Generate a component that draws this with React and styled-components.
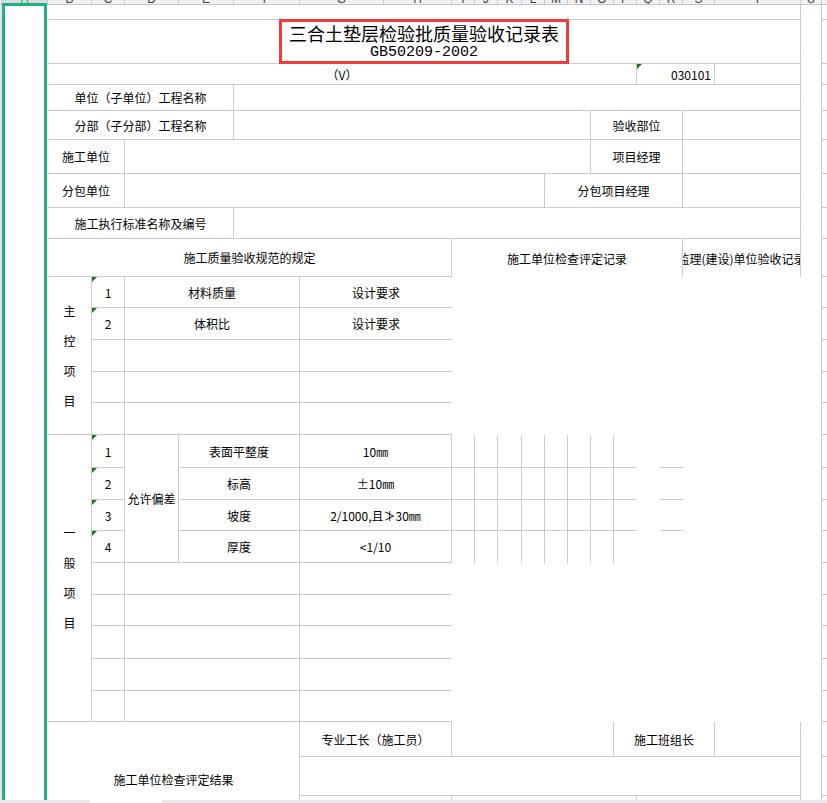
import React from "react";
import styled, { createGlobalStyle, css } from "styled-components";

const COLS = [2, 46, 44, 33, 54, 55, 66, 84, 68, 23, 23, 24, 23, 23, 23, 23, 23, 23, 23, 32, 86, 21, 40];
const ROWS = [15, 44, 21, 26, 29, 34, 34, 31, 38, 31, 32, 32, 31, 32, 33, 32, 31, 32, 32, 31, 33, 32, 31, 35, 39, 40];
const LETTERS = "ABCDEFGHIJKLMNOPQRSTUV";
const GRID = "#c6cbd9";

const colSpan = (spec) => {
  const [a, b] = spec.split(":");
  return [LETTERS.indexOf(a) + 2, LETTERS.indexOf(b || a) + 3];
};
const rowSpan = (spec) => {
  const [a, b] = String(spec).split(":").map(Number);
  return [a, (b || a) + 1];
};

const Global = createGlobalStyle`
  html, body { margin: 0; padding: 0; background: #fff; overflow: hidden; }
  body { font-family: "Noto Sans CJK SC", "Noto Sans", sans-serif; }
`;

const Sheet = styled.div`
  position: relative;
  width: 827px;
  height: 803px;
  overflow: hidden;
  background: #fff;
  display: flex;
  flex-direction: column;
`;

const HeaderBar = styled.div`
  flex: none;
  display: flex;
  height: 5px;
  box-sizing: border-box;
  background: #f1f1f3;
  border-bottom: 1px solid #c4c6cc;
  overflow: hidden;
`;

const HeaderCell = styled.div`
  flex: none;
  width: ${({ $w }) => $w}px;
  box-sizing: border-box;
  border-right: 1px solid #c9cad0;
  display: flex;
  align-items: flex-end;
  justify-content: center;
  font: 12px/10px "Liberation Sans", sans-serif;
  color: ${({ $active }) => ($active ? "#1fa872" : "#444")};
  background: ${({ $active }) => ($active ? "#d9dbe0" : "transparent")};
`;

const Grid = styled.div`
  flex: none;
  display: grid;
  grid-template-columns: ${COLS.map((w) => w + "px").join(" ")};
  grid-template-rows: ${ROWS.map((h) => h + "px").join(" ")};
`;

const Cell = styled.div`
  grid-column: ${({ $c }) => `${$c[0]} / ${$c[1]}`};
  grid-row: ${({ $r }) => `${$r[0]} / ${$r[1]}`};
  position: relative;
  box-sizing: border-box;
  min-width: 0;
  display: flex;
  align-items: center;
  justify-content: ${({ $align }) => ($align === "end" ? "flex-end" : "center")};
  padding-right: ${({ $align }) => ($align === "end" ? "3px" : "0")};
  border-right: ${({ $R }) => ($R ? `1px solid ${GRID}` : "0")};
  border-bottom: ${({ $B }) => ($B ? `1px solid ${GRID}` : "0")};
  overflow: ${({ $clip }) => ($clip ? "hidden" : "visible")};
  white-space: nowrap;
  font-size: 12px;
  color: #000;
  ${({ $tri }) =>
    $tri &&
    css`
      &::before {
        content: "";
        position: absolute;
        left: 0;
        top: 0;
        border-top: 5px solid #127c12;
        border-right: 5px solid transparent;
      }
    `}
`;

const TitleCell = styled(Cell)`
  align-items: flex-start;
`;

const RowEdge = styled(Cell)`
  background: #e6e7eb;
`;

const TitleFrame = styled.div`
  box-sizing: border-box;
  width: 290px;
  height: 45px;
  margin-top: -1px;
  border: 3px solid #f23b3b;
  display: flex;
  flex-direction: column;
  align-items: center;
  justify-content: center;
`;

const TitleMain = styled.div`
  font-family: "Noto Sans CJK SC", sans-serif;
  font-size: 18px;
  line-height: 22px;
  color: #000;
`;

const TitleCode = styled.div`
  font: 15px/17px "Liberation Mono", monospace;
  color: #000;
`;

const VerticalLabel = styled.div`
  display: flex;
  flex-direction: column;
  align-items: center;
  line-height: 30px;
`;

const SelectionFrame = styled.div`
  position: absolute;
  left: 2px;
  top: 3px;
  width: 45px;
  height: 830px;
  box-sizing: border-box;
  border: 3px solid #1fb27a;
  pointer-events: none;
`;

const ScrollStrip = styled.div`
  position: absolute;
  left: 0;
  right: 0;
  bottom: 0;
  height: 3px;
  background: #e8e8ec;
  display: flex;
`;

const ScrollGap = styled.div`
  margin-left: 90px;
  width: 72px;
  background: #fff;
`;

const cells = [];
const add = (c, r, opts = {}) => cells.push({ c, r, ...opts });

// Rows 1-9
add("B:T", 1, { R: 1, B: 1 });
add("B:T", 2, { R: 1, B: 1, title: true });
add("B:P", 3, { R: 1, B: 1, t: "（V）" });
add("Q:S", 3, { R: 1, B: 1, t: "030101", align: "end", tri: 1 });
add("T", 3, { R: 1, B: 1 });
add("B:E", 4, { R: 1, B: 1, t: "单位（子单位）工程名称" });
add("F:T", 4, { R: 1, B: 1 });
add("B:E", 5, { R: 1, B: 1, t: "分部（子分部）工程名称" });
add("F:N", 5, { R: 1, B: 1 });
add("O:R", 5, { R: 1, B: 1, t: "验收部位" });
add("S:T", 5, { R: 1, B: 1 });
add("B:C", 6, { R: 1, B: 1, t: "施工单位" });
add("D:N", 6, { R: 1, B: 1 });
add("O:R", 6, { R: 1, B: 1, t: "项目经理" });
add("S:T", 6, { R: 1, B: 1 });
add("B:C", 7, { R: 1, B: 1, t: "分包单位" });
add("D:L", 7, { R: 1, B: 1 });
add("M:R", 7, { R: 1, B: 1, t: "分包项目经理" });
add("S:T", 7, { R: 1, B: 1 });
add("B:E", 8, { R: 1, B: 1, t: "施工执行标准名称及编号" });
add("F:T", 8, { R: 1, B: 1 });
add("B:H", 9, { R: 1, B: 1, t: "施工质量验收规范的规定" });
add("I:R", 9, { R: 1, t: "施工单位检查评定记录" });
add("S:T", 9, { R: 1, t: "监理(建设)单位验收记录", clip: 1 });

// 主控项目 rows 10-14
add("B", "10:14", { R: 1, B: 1, v: "主控项目" });
const mainItems = [
  ["1", "材料质量", "设计要求"],
  ["2", "体积比", "设计要求"],
  ["", "", ""],
  ["", "", ""],
  ["", "", ""],
];
mainItems.forEach(([n, name, req], i) => {
  const r = 10 + i;
  add("C", r, { R: 1, B: 1, t: n, tri: n ? 1 : 0 });
  add("D:F", r, { R: 1, B: 1, t: name });
  add("G:H", r, { B: 1, t: req });
});

// 一般项目 rows 15-23
add("B", "15:23", { R: 1, B: 1, v: "一般项目" });
add("D", "15:18", { R: 1, B: 1, t: "允许偏差" });
const genItems = [
  ["1", "表面平整度", "10㎜"],
  ["2", "标高", "±10㎜"],
  ["3", "坡度", "2/1000,且≯30㎜"],
  ["4", "厚度", "<1/10"],
];
genItems.forEach(([n, name, val], i) => {
  const r = 15 + i;
  const last = i === genItems.length - 1;
  add("C", r, { R: 1, B: 1, t: n, tri: 1 });
  add("E:F", r, { R: 1, B: 1, t: name });
  add("G:H", r, { R: 1, B: 1, t: val });
  "IJKLMNO".split("").forEach((l) => add(l, r, { R: 1, B: last ? 0 : 1 }));
  add("P", r, { B: last ? 0 : 1 });
  add("R", r, { B: last ? 0 : 1 });
});
for (let r = 19; r <= 23; r++) {
  add("C", r, { R: 1, B: 1 });
  add("D:F", r, { R: 1, B: 1 });
  add("G:H", r, { B: 1 });
}

// Rows 24-26
add("B:F", "24:26", { R: 1, t: "施工单位检查评定结果" });
add("G:H", 24, { R: 1, B: 1, t: "专业工长（施工员）" });
add("I:O", 24, { R: 1, B: 1 });
add("P:S", 24, { R: 1, B: 1, t: "施工班组长" });
add("T", 24, { R: 1, B: 1 });
add("G:T", 25, { R: 1, B: 1 });
add("G:H", 26, { R: 1 });
add("I:P", 26, { R: 1 });
add("Q:T", 26, { R: 1 });

// Right margin columns
add("U", `1:${ROWS.length}`, { R: 1 });
for (let r = 1; r <= ROWS.length; r++) add("V", r, { B: 1 });

export default function App() {
  return (
    <>
      <Global />
      <Sheet>
        <HeaderBar>
          {COLS.map((w, i) => (
            <HeaderCell key={i} $w={w} $active={i === 1}>
              {i === 0 ? "" : LETTERS[i - 1]}
            </HeaderCell>
          ))}
        </HeaderBar>
        <Grid>
          <RowEdge $c={[1, 2]} $r={[1, ROWS.length + 1]} />
          {cells.map((cell, idx) => {
            const props = {
              $c: colSpan(cell.c),
              $r: rowSpan(cell.r),
              $R: !!cell.R,
              $B: !!cell.B,
              $tri: !!cell.tri,
              $align: cell.align,
              $clip: !!cell.clip,
            };
            if (cell.title) {
              return (
                <TitleCell key={idx} {...props}>
                  <TitleFrame>
                    <TitleMain>三合土垫层检验批质量验收记录表</TitleMain>
                    <TitleCode>GB50209-2002</TitleCode>
                  </TitleFrame>
                </TitleCell>
              );
            }
            return (
              <Cell key={idx} {...props}>
                {cell.v ? (
                  <VerticalLabel>
                    {cell.v.split("").map((ch, k) => (
                      <span key={k}>{ch}</span>
                    ))}
                  </VerticalLabel>
                ) : (
                  cell.t
                )}
              </Cell>
            );
          })}
        </Grid>
        <SelectionFrame />
        <ScrollStrip>
          <ScrollGap />
        </ScrollStrip>
      </Sheet>
    </>
  );
}
